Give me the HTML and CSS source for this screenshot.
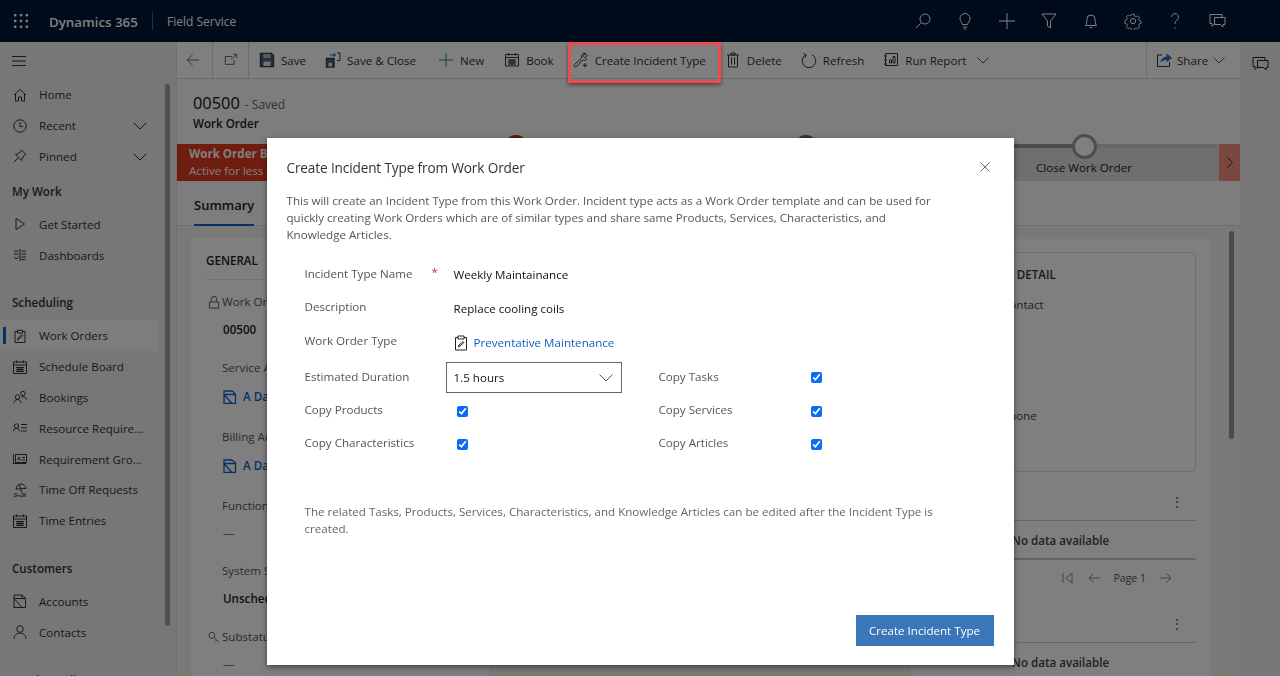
FILE: index.html
```html
<!DOCTYPE html>
<html lang="en">
<head>
<meta charset="utf-8">
<title>Create Incident Type from Work Order</title>
<link rel="stylesheet" href="styles.css">
</head>
<body>
<div class="app">
  <header class="topbar">
    <svg class="waffle" width="16" height="16" viewBox="0 0 16 16"><rect x="1" y="1" width="2.4" height="2.4"/><rect x="6.8" y="1" width="2.4" height="2.4"/><rect x="12.6" y="1" width="2.4" height="2.4"/><rect x="1" y="6.8" width="2.4" height="2.4"/><rect x="6.8" y="6.8" width="2.4" height="2.4"/><rect x="12.6" y="6.8" width="2.4" height="2.4"/><rect x="1" y="12.6" width="2.4" height="2.4"/><rect x="6.8" y="12.6" width="2.4" height="2.4"/><rect x="12.6" y="12.6" width="2.4" height="2.4"/></svg>
    <span class="brand">Dynamics 365</span>
    <span class="app-name">Field Service</span>
    <div class="top-icons">
      <svg class="ti" viewBox="0 0 18 18"><circle cx="11" cy="7" r="5"/><path d="M7.4 10.6 2 16"/></svg>
      <svg class="ti" viewBox="0 0 18 18"><path d="M6.5 12.5C6.300 10.500 4 9.500 4 6.500a5 5 0 0 1 10 0c0 3-2.300 4-2.500 6zM6.800 15h4.400M7.800 17h2.400"/></svg>
      <svg class="ti" viewBox="0 0 18 18"><path d="M9 1v16M1 9h16"/></svg>
      <svg class="ti" viewBox="0 0 18 18"><path d="M2 2h14l-5.500 7v7l-3-2V9z"/></svg>
      <svg class="ti" viewBox="0 0 18 18"><path d="M3.500 13.500c1.500-1.500 1-4 1.500-6.500a4 4 0 0 1 8 0c.5 2.500 0 5 1.500 6.500zM7.500 15.500h3"/></svg>
      <svg class="ti" viewBox="0 0 18 18"><circle cx="9" cy="9" r="2.600"/><path d="M7.600 1.500h2.800l.4 2 1.700.8 1.800-1 2 2-1 1.800.7 1.700 2 .5v2.400l-2 .5-.7 1.700 1 1.800-2 2-1.800-1-1.700.7-.4 2H7.600l-.4-2-1.700-.7-1.800 1-2-2 1-1.800-.7-1.700-2-.5V8.300l2-.5.700-1.700-1-1.800 2-2 1.800 1 1.700-.8z" transform="translate(.9 .9) scale(.9)"/></svg>
      <svg class="ti" viewBox="0 0 18 18"><path d="M5.500 5a3.500 3.500 0 1 1 5.500 3c-1.500 1-2 2-2 4M9 15v1.500"/></svg>
      <svg class="ti" viewBox="0 0 18 18"><path d="M14 5V2.500H2v9h2v3l3-3"/><path d="M6.500 5.500h10.500v7h-2v2.500l-2.500-2.500H6.500z"/></svg>
    </div>
  </header>

  <div class="workspace">
    <nav class="sidebar">
      <div class="hamburger-row"><svg class="burger" width="14" height="10" viewBox="0 0 14 10"><path d="M0 .5h14M0 5h14M0 9.500h14"/></svg></div>
      <div class="nav-scroll"></div>
      <a class="nav-item"><svg class="ni" viewBox="0 0 14 14"><path d="M1 7 7 1.500 13 7M2.500 6v7h3V9h3v4h3V6"/></svg><span>Home</span></a>
      <a class="nav-item"><svg class="ni" viewBox="0 0 14 14"><circle cx="7" cy="7" r="6.200"/><path d="M7 3v4.500h3"/></svg><span>Recent</span><svg class="nav-chev" viewBox="0 0 14 8"><path d="M.5.500 7 7l6.500-6.500"/></svg></a>
      <a class="nav-item"><svg class="ni" viewBox="0 0 14 14"><path d="M8.500 1 13 5.500 11.500 6 9 9.500l-.3 2L2.500 5.300l2-.3L8 2.500zM5.500 8.500.8 13.200"/></svg><span>Pinned</span><svg class="nav-chev" viewBox="0 0 14 8"><path d="M.5.500 7 7l6.500-6.500"/></svg></a>
      <div class="nav-head">My Work</div>
      <a class="nav-item"><svg class="ni" viewBox="0 0 14 14"><path d="M3 1.500v11L11.500 7z"/></svg><span>Get Started</span></a>
      <a class="nav-item"><svg class="ni" viewBox="0 0 14 14"><path d="M7 1v12M1 3h4.500M8.500 3H13M1 6h4.500M8.500 6H13M1 9l2 2 2.500-2M8.500 9h4.500M8.500 11.500H12"/></svg><span>Dashboards</span></a>
      <div class="nav-head nav-group">Scheduling</div>
      <a class="nav-item is-active"><svg class="ni" viewBox="0 0 14 14"><path d="M4.500 2.500H2v11h10v-11H9.500M4.500 1.200h5v2.800h-5zM4.500 11l.5-2 4-3.500 1 1-4 3.500z"/></svg><span>Work Orders</span></a>
      <a class="nav-item"><svg class="ni" viewBox="0 0 14 14"><path d="M.5 2h13v11.500H.5zM.5 5h13M3.500.500v2.500M10.500.500v2.500M3 7.500h8M3 9.500h8M3 11.500h8M5 7v5M7 7v5M9 7v5"/></svg><span>Schedule Board</span></a>
      <a class="nav-item"><svg class="ni" viewBox="0 0 14 14"><circle cx="4.500" cy="7" r="2.200"/><circle cx="10" cy="3.500" r="2.200"/><path d="M1 13c0-2 1.500-3.500 3.500-3.500S8 11 8 13M8.500 7c2-.5 4.500 0 5 2.500"/></svg><span>Bookings</span></a>
      <a class="nav-item"><svg class="ni" viewBox="0 0 14 14"><circle cx="3.500" cy="5" r="2.200"/><path d="M.5 10.500c0-2 1-3 3-3s3 1 3 3M8 3.500h6M8 6.800h6M8 10h6"/></svg><span>Resource Require...</span></a>
      <a class="nav-item"><svg class="ni" viewBox="0 0 14 14"><path d="M.5 2v9.500H13M2.500 2.500h11v8h-11zM4.500 8.500 6 5l1.500 3.500M9 5.500h3M9 8h3"/></svg><span>Requirement Gro...</span></a>
      <a class="nav-item"><svg class="ni" viewBox="0 0 14 14"><path d="M3 6c0-3 2.500-5 5-5s4.500 2 5 4.500L3 6zM6 1.500l3 8M1 13.500c3-1 5-1 8 0M1 11h3M8.500 10.500l4.500 1M9 13h4"/></svg><span>Time Off Requests</span></a>
      <a class="nav-item"><svg class="ni" viewBox="0 0 14 14"><path d="M.5 2h13v11.500H.5zM.5 5h13M3.500.500v2.500M10.500.500v2.500M3 7.500h8M3 9.500h8M3 11.500h8M5 7v5M7 7v5M9 7v5"/></svg><span>Time Entries</span></a>
      <div class="nav-head nav-group">Customers</div>
      <a class="nav-item"><svg class="ni" viewBox="0 0 14 14"><path d="M1 1h8l3.500 3v9.500H1zM1 4.500h11.500M1 4.500 9 13.500M9 1v3.500"/></svg><span>Accounts</span></a>
      <a class="nav-item"><svg class="ni" viewBox="0 0 14 14"><circle cx="7" cy="4" r="3.300"/><path d="M1 14c0-3.500 2.500-6 6-6s6 2.500 6 6"/></svg><span>Contacts</span></a>
      <div class="nav-head nav-group">Service Delivery</div>
    </nav>

    <main class="main">
      <div class="commandbar">
        <div class="cmd-sq"><svg class="ci back" viewBox="0 0 16 16"><path d="M15 8H1.500M7.500 2 1.500 8l6 6"/></svg></div>
        <div class="cmd-sq"><svg class="ci pop" viewBox="0 0 16 16"><path d="M9 4H1.500v9h10V8M8 7l6-5M10.500 1.500H14.500V5.500" /></svg></div>
        <button class="cmd cmd-save"><svg class="ci floppy" viewBox="0 0 16 16"><path class="fl-body" d="M1.500 1.500h11l2 2v11h-13z"/><path class="fl-top" d="M4.500 2h7v4h-7z"/><path class="fl-bot" d="M4.500 9.500h7V14h-7z"/></svg>Save</button>
        <button class="cmd cmd-sc"><svg class="ci floppy" viewBox="0 0 16 16"><path class="fl-body" d="M1.500 6.500h7.500v8.500H1.500z"/><path class="fl-bot" d="M3.500 11h3.500v3.500H3.500z"/><path class="fl-arrow" d="M5 3h5M8.500 1.300 10.200 3 8.500 4.700"/><path d="M12 1h3v7.500h-3"/></svg>Save &amp; Close</button>
        <button class="cmd cmd-new"><svg class="ci plus" viewBox="0 0 16 16"><path d="M8 1v14M1 8h14"/></svg>New</button>
        <button class="cmd cmd-book"><svg class="ci" viewBox="0 0 16 16"><path d="M1.500 2.500h13v11.500h-13zM1.500 5.500h13M4.500 1v2.500M11.500 1v2.500M4 8h8M4 10h8M4 12h8M6 7.500v5M8 7.500v5M10 7.500v5"/></svg>Book</button>
        <button class="cmd cmd-inc"><svg class="ci" viewBox="0 0 16 16"><path d="M10 1.500c2-.8 4 .5 4.300 2.500L12.200 6l-2-2L12 2zM10.300 1.500C8.500 2.500 8 4.500 8.800 6L1.500 12.500c-1 1.500 1 3 2.200 2L9.500 8c1 .8 3 .7 4.500-1"/><path d="M12 11v4.500M9.800 13.300h4.400"/></svg>Create Incident Type</button>
        <button class="cmd cmd-del"><svg class="ci" viewBox="0 0 16 16"><path d="M2 3h12M3.500 3v12h9V3M6 1h4v2H6zM6.500 5.500v7M9.500 5.500v7"/></svg>Delete</button>
        <button class="cmd cmd-ref"><svg class="ci" viewBox="0 0 16 16"><path d="M5 2.800A6.800 6.800 0 1 0 11 2.800M2.500 1.500 5.300 3 3.800 5.500"/></svg>Refresh</button>
        <button class="cmd cmd-run"><svg class="ci" viewBox="0 0 16 16"><path d="M2.500 1.500h12v12h-12zM1 4h3M1 8h3M1 12h3M6.500 11V8h2v3zM10 11V4.500h2V11z"/></svg>Run Report</button>
        <svg class="cmd-chev run-chev" viewBox="0 0 12 7"><path d="M.5.500 6 6 11.500.500"/></svg>
        <div class="cmd-right">
          <svg class="ci share" viewBox="0 0 16 16"><path class="sh-l" d="M6 3H1.500v11.500h12V10"/><path class="sh-f" d="M5 10c.5-3.500 3-5 6-5V2l4.500 4L11 9.500V7.500C8.500 7.500 6.500 8 5 10z"/></svg>
          <span>Share</span>
          <svg class="cmd-chev" viewBox="0 0 12 7"><path d="M.5.500 6 6 11.500.500"/></svg>
        </div>
      </div>

      <div class="record">
        <div class="rec-title"><span class="rec-num">00500</span><span class="rec-state">- Saved</span></div>
        <div class="rec-type">Work Order</div>
      </div>

      <div class="bpf">
        <div class="bpf-flag"><strong>Work Order Business Process</strong><span>Active for less than one minute</span></div>
        <div class="bpf-track">
          <i class="track-line"></i>
          <i class="track-done"></i>
          <i class="stage stage-red"></i>
          <i class="stage stage-gray"></i>
          <div class="stage-last"><i class="stage-ring"></i><span>Close Work Order</span></div>
        </div>
        <div class="bpf-next"><svg width="8" height="13" viewBox="0 0 8 13"><path d="M1 1l5.500 5.500L1 12"/></svg></div>
      </div>

      <div class="tabs"><span class="tab">Summary</span></div>

      <div class="content">
        <section class="card card-general">
          <h3 class="card-title">GENERAL</h3>
          <div class="field"><div class="f-label f-lock"><svg class="f-ic" viewBox="0 0 12 14"><path d="M1 6.500h10V13H1zM3 6.500V3.500a3 3 0 0 1 6 0v3"/></svg>Work Order Number</div><div class="f-val">00500</div></div>
          <div class="field field-lookup"><div class="f-label f-in">Service Account</div><div class="f-link"><svg class="acc" viewBox="0 0 14 14"><path d="M1 1h8l3.500 3v9.500H1zM1 4.500h11.500M1 4.500 9 13.500"/></svg>A Datum Corporation</div></div>
          <div class="field field-lookup"><div class="f-label f-in">Billing Account</div><div class="f-link"><svg class="acc" viewBox="0 0 14 14"><path d="M1 1h8l3.500 3v9.500H1zM1 4.500h11.500M1 4.500 9 13.500"/></svg>A Datum Corporation</div></div>
          <div class="field field-short"><div class="f-label f-in">Functional Location</div><div class="f-val f-none">---</div></div>
          <div class="field"><div class="f-label f-in">System Status</div><div class="f-val">Unscheduled</div></div>
          <div class="field"><div class="f-label f-lock"><svg class="f-ic" viewBox="0 0 14 14"><circle cx="4.500" cy="4.500" r="3.500"/><path d="M7 7l5.500 5.500M10 10l-1.500 1.500"/></svg>Substatus</div><div class="f-val f-none">---</div></div>
        </section>
        <div class="mid-col"></div>
        <div class="right-col">
          <section class="card-detail">
            <h3 class="detail-title">GENERAL DETAIL</h3>
            <div class="d-row">Contact</div>
            <div class="d-row d-phone">Phone</div>
          </section>
          <section class="grid-block">
            <div class="grid-head"><span class="kebab">⋮</span></div>
            <div class="grid-empty">No data available</div>
            <div class="pager">
              <svg class="pg" viewBox="0 0 12 12"><path d="M1 1v10M10 1 4 6l6 5z"/></svg>
              <svg class="pg" viewBox="0 0 12 12"><path d="M12 6H1M5.500 1.500 1 6l4.500 4.500"/></svg>
              <span>Page 1</span>
              <svg class="pg" viewBox="0 0 12 12"><path d="M0 6h11M6.500 1.500 11 6l-4.500 4.500"/></svg>
            </div>
          </section>
          <section class="grid-block">
            <div class="grid-head"><span class="kebab">⋮</span></div>
            <div class="grid-empty">No data available</div>
          </section>
        </div>
        <div class="page-scroll"></div>
      </div>
    </main>

    <aside class="rail"><svg class="rail-ic" viewBox="0 0 18 18"><path d="M14 5V2.500H2v9h2v3l3-3"/><path d="M6.500 5.500h10.500v7h-2v2.500l-2.500-2.500H6.500z"/></svg></aside>
  </div>
</div>

<div class="overlay">
  <div class="dialog">
    <div class="dlg-head">
      <h2 class="dlg-title">Create Incident Type from Work Order</h2>
      <svg class="dlg-close" viewBox="0 0 10 10"><path d="M.5.500l9 9M9.500.500l-9 9"/></svg>
    </div>
    <p class="dlg-intro">This will create an Incident Type from this Work Order. Incident type acts as a Work Order template and can be used for quickly creating Work Orders which are of similar types and share same Products, Services, Characteristics, and Knowledge Articles.</p>
    <div class="form">
      <div class="row r-name"><label class="lbl">Incident Type Name<span class="req">*</span></label><div class="val">Weekly Maintainance</div></div>
      <div class="row r-desc"><label class="lbl">Description</label><div class="val val-low">Replace cooling coils</div></div>
      <div class="row r-type"><label class="lbl">Work Order Type</label><div class="val val-low val-link"><svg class="clip" viewBox="0 0 14 16"><path d="M4 2.500H1.500v12.500h11V2.500H10M4 1h6v3H4zM4.500 12l.5-2 4-3.500 1 1-4 3.500z"/></svg><a>Preventative Maintenance</a></div></div>
      <div class="row r-dur">
        <label class="lbl lbl-up">Estimated Duration</label>
        <div class="select"><span>1.5 hours</span><svg class="sel-chev" viewBox="0 0 14 8"><path d="M.5.500 7 7l6.500-6.500"/></svg></div>
        <label class="lbl lbl-up lbl2">Copy Tasks</label><input class="chk" type="checkbox" checked>
      </div>
      <div class="row r-chk">
        <label class="lbl lbl-up">Copy Products</label><div class="cell"><input class="chk" type="checkbox" checked></div>
        <label class="lbl lbl-up lbl2">Copy Services</label><input class="chk" type="checkbox" checked>
      </div>
      <div class="row r-chk">
        <label class="lbl lbl-up">Copy Characteristics</label><div class="cell"><input class="chk" type="checkbox" checked></div>
        <label class="lbl lbl-up lbl2">Copy Articles</label><input class="chk" type="checkbox" checked>
      </div>
    </div>
    <p class="dlg-note">The related Tasks, Products, Services, Characteristics, and Knowledge Articles can be edited after the Incident Type is created.</p>
    <div class="dlg-foot"><button class="primary">Create Incident Type</button></div>
  </div>
</div>
<div class="callout"></div>
</body>
</html>
```

FILE: styles.css
```css
* { box-sizing: border-box; }
html, body { margin: 0; height: 100%; overflow: hidden; }
body { font-family: "Open Sans", "Noto Sans", sans-serif; font-size: 11.6px; color: #333; background: #fff; }
svg { fill: none; stroke: currentColor; stroke-width: 1; flex: none; display: block; }

.app { display: flex; flex-direction: column; height: 676px; }
.topbar { height: 42px; background: #001638; color: #fff; display: flex; align-items: center; padding-left: 13px; flex: none; }
.waffle { stroke: none; fill: currentColor; }
.brand { font-size: 13.3px; font-weight: 600; margin: 2px 0 0 20px; width: 103px; white-space: nowrap; }
.app-name { font-size: 12px; border-left: 1px solid #556; height: 18px; line-height: 20px; padding-left: 14px; }
.top-icons { margin-left: auto; margin-right: 54px; display: flex; gap: 24px; color: #fff; }
.ti { width: 18px; height: 18px; }

.workspace { flex: 1; display: flex; min-height: 0; }
.sidebar { width: 176px; flex: none; background: #efefef; position: relative; overflow: hidden; color: #333; }
.hamburger-row { height: 37.500px; display: flex; align-items: center; padding-left: 12px; }
.nav-scroll { position: absolute; left: 165px; top: 42px; width: 5px; height: 542px; border-radius: 3px; background: #a0a0a0; }
.nav-item { height: 30.800px; display: flex; align-items: center; padding-left: 13px; width: 159px; position: relative; font-size: 11.6px; }
.ni { width: 14px; height: 14px; margin-right: 12px; }
.nav-chev { width: 14px; height: 8px; position: absolute; left: 133px; top: 12px; }
.nav-head { height: 37px; display: flex; align-items: center; padding: 2px 0 0 12px; font-weight: 600; font-size: 11.6px; }
.nav-group { margin-top: 13px; }
.is-active { background: #fbfbfb; }
.is-active::before { content: ""; position: absolute; left: 3px; top: 7px; width: 3px; height: 17px; background: #0f5fd0; }

.main { flex: 1; min-width: 0; background: #f3f2f1; display: flex; flex-direction: column; position: relative; overflow: hidden; border-left: 1px solid #e0e0e0; }
.commandbar { height: 37px; flex: none; background: #fff; border-bottom: 1px solid #d8d8d8; display: flex; align-items: center; font-size: 11.6px; color: #333; }
.cmd-sq { width: 36px; height: 36px; border-right: 1px solid #d8d8d8; display: flex; align-items: center; justify-content: center; color: #555; }
.ci { width: 16px; height: 16px; }
.back { width: 14px; height: 14px; margin-right: 3px; }
.pop { width: 14px; height: 14px; }
.cmd { border: 0; background: none; font: inherit; color: inherit; display: flex; align-items: center; padding: 0; white-space: nowrap; }
.cmd .ci { margin-right: 6px; }
.cmd-save { margin-left: 10px; }
.cmd-sc { margin-left: 19px; }
.cmd-new { margin-left: 22px; }
.cmd-book { margin-left: 20px; }
.cmd-inc { margin-left: 19px; }
.cmd-del { margin-left: 19px; }
.cmd-ref { margin-left: 19px; }
.cmd-run { margin-left: 19px; }
.plus { color: #2a8a3e; }
.fl-body { stroke: #2c3a4a; stroke-width: 1.4; fill: #50657c; }
.fl-top { fill: #a9bccf; stroke: none; }
.fl-bot { fill: #e8e8e8; stroke: none; }
.fl-arrow { stroke: #2b6fc4; stroke-width: 1.2; }
.cmd-chev { width: 12px; height: 7px; color: #555; }
.run-chev { margin-left: 11px; }
.cmd-right { margin-left: auto; width: 94px; height: 36px; border-left: 1px solid #d8d8d8; display: flex; align-items: center; padding-left: 9px; gap: 5px; }
.sh-f { fill: #2b6fc4; stroke: #2b6fc4; }

.record { height: 65px; background: #fbfbfb; flex: none; padding: 13px 0 0 16px; }
.rec-title { display: flex; align-items: baseline; }
.rec-num { font-size: 16.400px; font-weight: 500; color: #111; line-height: 22px; }
.rec-state { margin-left: 5px; color: #666; font-size: 12px; }
.rec-type { font-weight: 600; margin-top: 2px; color: #222; }

.bpf { height: 37px; flex: none; display: flex; background: #dedede; position: relative; }
.bpf-flag { width: 300px; background: #e03a22; color: #fff; padding: 2px 0 0 12px; display: flex; flex-direction: column; line-height: 16.500px; overflow: hidden; white-space: nowrap; }
.bpf-track { flex: 1; position: relative; }
.track-line { position: absolute; left: 0; right: 2px; top: 0; height: 4px; background: #cfcfcf; }
.track-done { position: absolute; left: 320px; width: 280px; top: 0; height: 4px; background: #999; }
.stage { position: absolute; top: -9px; width: 22px; height: 22px; border-radius: 50%; }
.stage-red { left: 28px; background: #c62d1b; }
.stage-gray { left: 318px; background: #666; }
.stage-last { position: absolute; left: 557px; top: -10px; width: 100px; display: flex; flex-direction: column; align-items: center; color: #222; }
.stage-ring { width: 25px; height: 25px; border-radius: 50%; background: #fff; border: 3px solid #999; margin-bottom: 1px; }
.bpf-next { width: 21px; background: #f4907e; display: flex; align-items: center; justify-content: center; color: #333; }

.tabs { height: 45px; flex: none; background: #fbfbfb; border-bottom: 1px solid #ddd; padding-left: 17px; }
.tab { display: inline-block; height: 45px; line-height: 48px; font-size: 13px; font-weight: 600; color: #222; border-bottom: 2px solid #0f5fd0; }

.content { flex: 1; display: flex; padding: 0 0 0 14px; min-height: 0; position: relative; background: #f3f2f1; }
.card { background: #fff; }
.card-general { width: 298px; margin-top: 12px; padding: 0 15px; }
.card-title { margin: 0 0 14px; padding: 15px 0 10px; font-size: 11.6px; font-weight: 600; border-bottom: 1px solid #e8e8e8; color: #222; line-height: 16px; }
.field { height: 66px; }
.field-lookup { height: 69px; }
.field-short { height: 65px; }
.f-label { color: #555; line-height: 16px; white-space: nowrap; display: flex; align-items: center; }
.f-in { padding-left: 16px; }
.f-ic { width: 12px; height: 13px; margin: 0 2px 0 2px; }
.f-val { padding-left: 17px; margin-top: 12px; font-weight: 600; color: #222; }
.f-none { font-weight: 400; color: #444; margin-top: 11px; }
.f-link { padding-left: 17px; margin-top: 13px; display: flex; align-items: center; font-weight: 600; color: #0f5fd0; white-space: nowrap; }
.acc { width: 14px; height: 14px; margin-right: 6px; stroke-width: 1.300; }
.mid-col { flex: 1; }
.right-col { width: 299px; margin: 13px 30px 0 0; background: #fff; border-radius: 4px 4px 0 0; padding: 13px 14px 0; display: flex; flex-direction: column; }
.card-detail { height: 220px; flex: none; border: 1px solid #ddd; border-radius: 3px; padding: 14px 0 0 36px; }
.detail-title { margin: 0; font-size: 11.600px; font-weight: 600; line-height: 16px; color: #333; white-space: nowrap; }
.d-row { color: #444; margin-top: 14px; padding-left: 40px; }
.d-phone { margin-top: 96px; }
.grid-block { margin-top: 19px; flex: none; }
.grid-head { height: 30px; border-bottom: 1px solid #d0d0d0; text-align: right; padding-right: 13px; color: #444; line-height: 22px; }
.grid-empty { height: 39px; line-height: 40px; border-bottom: 2px solid #c8c8c8; font-weight: 600; color: #444; text-align: center; }
.pager { height: 36px; display: flex; align-items: center; justify-content: flex-end; gap: 14px; padding-right: 24px; color: #555; font-size: 10.500px; }
.pg { width: 12px; height: 12px; color: #888; }
.grid-block + .grid-block { margin-top: 17px; }
.page-scroll { position: absolute; right: 6px; top: 5px; width: 5px; height: 208px; border-radius: 3px; background: #999; }

.rail { width: 40px; flex: none; background: #efefee; display: flex; justify-content: center; padding-top: 13px; }
.rail-ic { width: 18px; height: 18px; color: #222; }

.overlay { position: fixed; inset: 0; background: rgba(0,0,0,.5); display: flex; justify-content: center; align-items: flex-start; padding-top: 138px; z-index: 10; }
.dialog { width: 747px; height: 527px; background: #fff; box-shadow: 0 2px 6px rgba(0,0,0,.5); padding: 19px 20px 19px 20px; display: flex; flex-direction: column; color: #444; }
.dlg-head { display: flex; justify-content: space-between; align-items: center; height: 20px; }
.dlg-title { margin: 0; font-size: 13.600px; letter-spacing: -.13px; font-weight: 400; color: #333; white-space: nowrap; }
.dlg-close { width: 10px; height: 10px; margin-right: 4px; color: #666; }
.dlg-intro { margin: 15px 0 0; line-height: 17px; width: 660px; color: #555; height: 51px; }
.form { margin: 14px 0 0 18px; }
.row { display: grid; grid-template-columns: 141px 176px 37px 152px 12px; align-items: center; }
.r-name { height: 33px; }
.r-desc { height: 33px; }
.r-type { height: 34px; }
.r-dur { height: 33px; margin-top: 4px; }
.r-chk { height: 33px; }
.lbl { color: #555; position: relative; white-space: nowrap; }
.lbl-up { top: -1px; }
.lbl2 { grid-column: 4; }
.req { position: absolute; left: 127px; top: -2px; color: #d13438; }
.val { color: #111; padding: 2px 0 0 8px; grid-column: 2 / 5; font-weight: 500; }
.val-low { padding-top: 3px; }
.val-link { display: flex; align-items: center; padding-top: 5px; }
.val-link a { color: #0f5fc0; margin-left: 6px; }
.clip { width: 14px; height: 16px; color: #222; }
.select { height: 31px; border: 1px solid #666; display: flex; align-items: center; justify-content: space-between; padding: 0 8px 0 7px; color: #111; font-weight: 500; }
.sel-chev { width: 14px; height: 8px; color: #555; }
.cell { padding-left: 11px; }
.chk { width: 11px; height: 11px; margin: 0; accent-color: #0a6cf5; display: block; }
.r-chk .chk { position: relative; top: 1px; }
.dlg-note { margin: 43px 0 0 18px; line-height: 17px; width: 650px; color: #666; }
.dlg-foot { margin-top: auto; display: flex; justify-content: flex-end; }
.primary { width: 138px; height: 31px; border: 0; background: #3a76b8; color: #fff; font: inherit; }
.callout { position: fixed; left: 568px; top: 42px; width: 153px; height: 41px; border: 3px solid #ef4a4f; box-shadow: 0 2px 4px rgba(0,0,0,.45); z-index: 20; }
```
